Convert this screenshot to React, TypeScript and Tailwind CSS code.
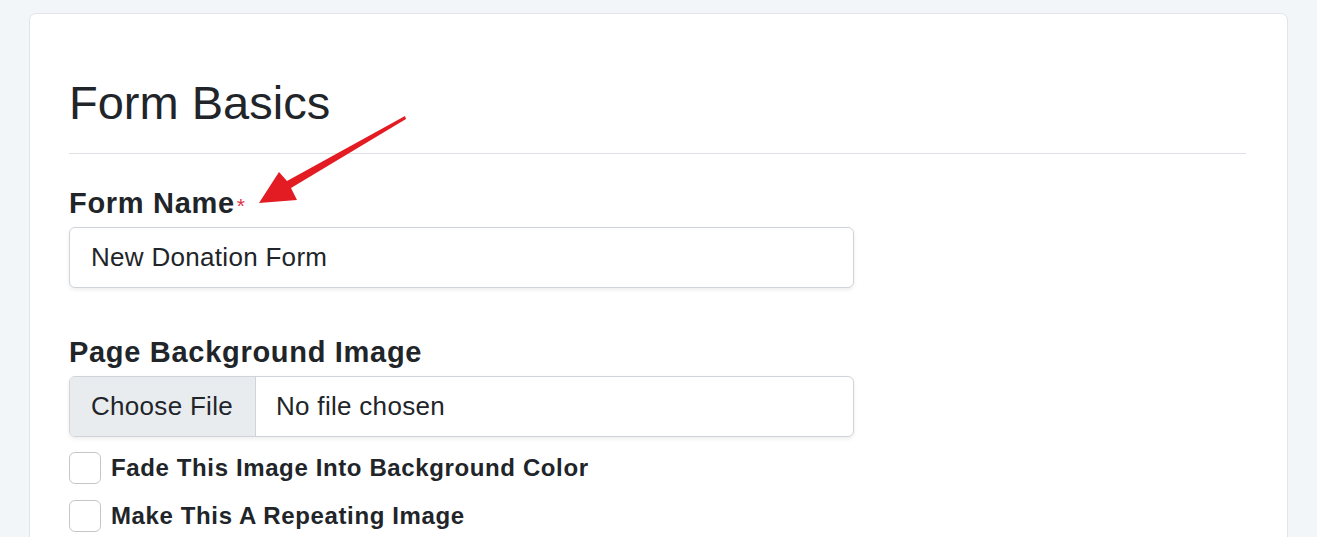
import React from "react";

function Arrow() {
  return (
    <svg
      className="absolute left-0 top-0 pointer-events-none"
      width={1317}
      height={537}
      viewBox="0 0 1317 537"
    >
      <polygon
        points="405,116 287,181 279,172 259,203 297,200 291,188 406,119"
        fill="#e31c23"
      />
    </svg>
  );
}

function Checkbox({ label }: { label: string }) {
  return (
    <label className="flex items-center gap-[10px]">
      <span className="w-[32px] h-[32px] rounded-[6px] border border-[#c4c6c8] bg-white shrink-0" />
      <span className="text-[24px] font-bold tracking-[0.62px] text-[#212529] leading-[1.2]">
        {label}
      </span>
    </label>
  );
}

export default function App() {
  return (
    <div
      className="relative min-h-screen bg-[#f3f6f9] pt-[13px] px-[29px] overflow-hidden"
      style={{ fontFamily: '"Liberation Sans", Arial, sans-serif' }}
    >
      <div className="bg-white border border-[#e1e4e8] rounded-[7px] pl-[39px] pr-[41px] pt-[61px] pb-16">
        <h1 className="text-[47px] leading-[1.2] font-normal text-[#212529]">
          Form Basics
        </h1>
        <div className="h-px bg-[#dee2e6] mt-[22px]" />

        {/* Form name */}
        <div className="mt-[32px]">
          <div className="text-[29px] font-bold tracking-[0.7px] leading-[1.2] text-[#212529]">
            Form Name
            <span className="ml-[2px] text-[21px] font-normal text-[#dc3545] tracking-normal">*</span>
          </div>
          <div className="mt-[6px] w-[785px] h-[61px] border border-[#ced4da] rounded-[6px] bg-white flex items-center px-[21px] shadow-[0_2px_4px_rgba(0,0,0,0.07)]">
            <span className="text-[26px] tracking-[0.3px] text-[#212529]">
              New Donation Form
            </span>
          </div>
        </div>

        {/* Background image */}
        <div className="mt-[47px]">
          <div className="text-[29px] font-bold tracking-[0.7px] leading-[1.2] text-[#212529]">
            Page Background Image
          </div>
          <div className="mt-[6px] w-[785px] h-[61px] border border-[#ced4da] rounded-[6px] bg-white flex overflow-hidden shadow-[0_2px_4px_rgba(0,0,0,0.07)]">
            <div className="w-[186px] bg-[#e9ecef] border-r border-[#ced4da] flex items-center px-[21px]">
              <span className="text-[26px] tracking-[0.3px] text-[#212529]">
                Choose File
              </span>
            </div>
            <div className="flex items-center px-[20px]">
              <span className="text-[26px] tracking-[0.3px] text-[#212529]">
                No file chosen
              </span>
            </div>
          </div>
          <div className="mt-[15px] flex flex-col gap-[16px]">
            <Checkbox label="Fade This Image Into Background Color" />
            <Checkbox label="Make This A Repeating Image" />
          </div>
        </div>
      </div>
      <Arrow />
    </div>
  );
}
